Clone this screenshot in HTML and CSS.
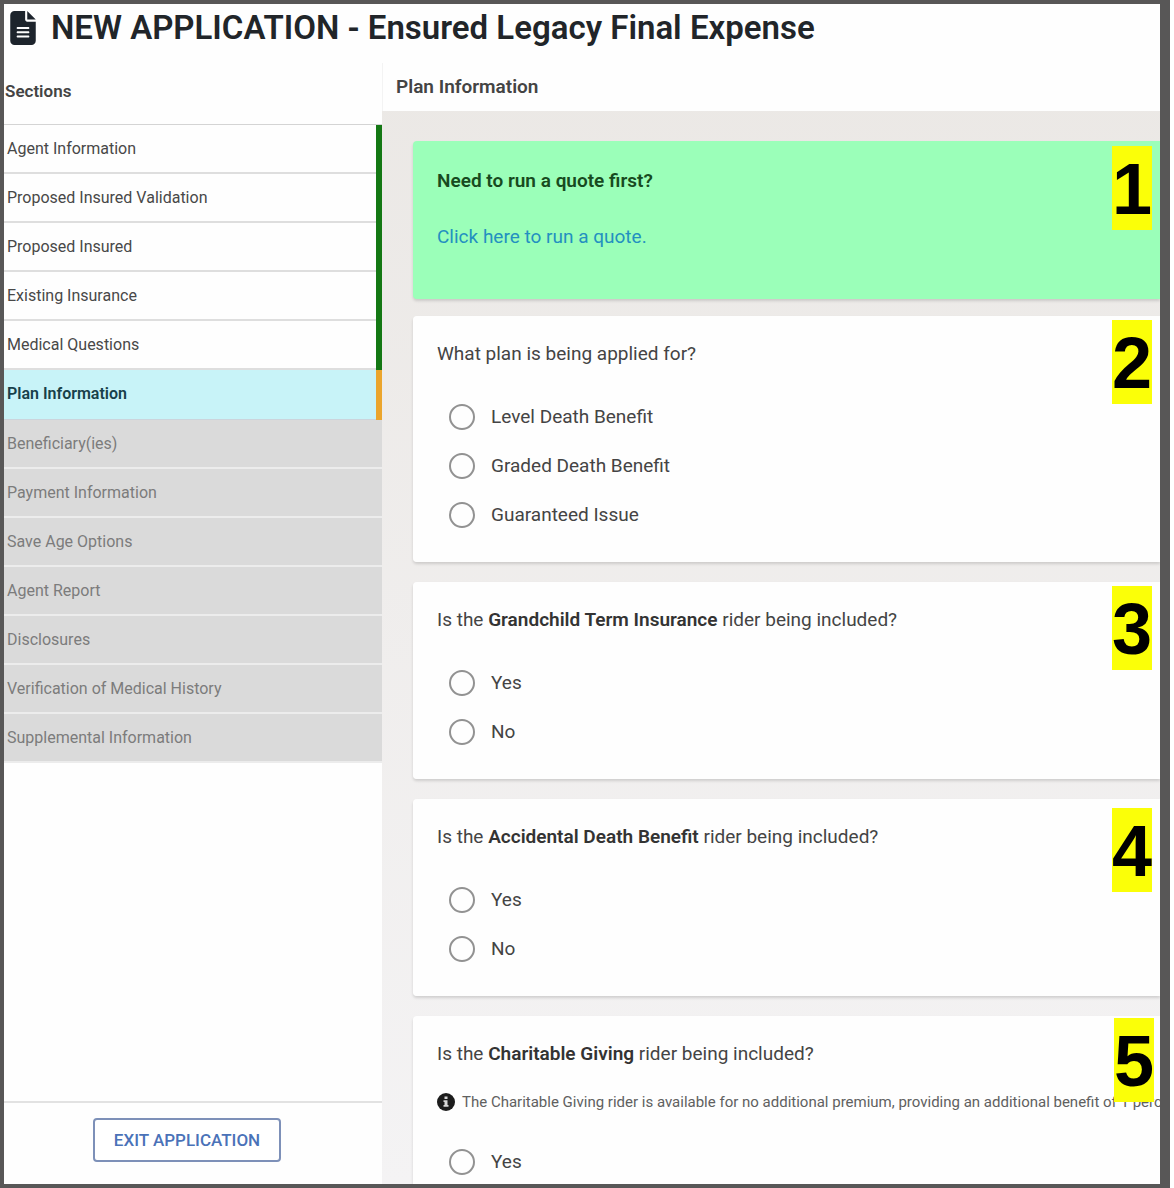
FILE: index.html
```html
<!DOCTYPE html>
<html lang="en">
<head>
    <meta charset="UTF-8">
    <meta name="viewport" content="width=device-width, initial-scale=1.0">
    <title>New Application</title>
    <link rel="stylesheet" href="styles.css">
</head>
<body>
    <div class="app">
        <header class="app-header">
            <svg class="file-icon" viewBox="0 0 384 512" aria-hidden="true">
                <path d="M64 0C28.700 0 0 28.700 0 64V448c0 35.300 28.700 64 64 64H320c35.300 0 64-28.700 64-64V160H256c-17.700 0-32-14.300-32-32V0H64zM256 0V128H384L256 0zM112 240H272c8.800 0 16 7.200 16 16s-7.200 16-16 16H112c-8.800 0-16-7.200-16-16s7.200-16 16-16zm0 64H272c8.800 0 16 7.200 16 16s-7.200 16-16 16H112c-8.800 0-16-7.200-16-16s7.200-16 16-16zm0 64H272c8.800 0 16 7.200 16 16s-7.200 16-16 16H112c-8.800 0-16-7.200-16-16s7.200-16 16-16z"/>
            </svg>
            <h1>NEW APPLICATION - Ensured Legacy Final Expense</h1>
        </header>

        <div class="layout">
            <aside class="sidebar">
                <h2 class="sidebar-title">Sections</h2>
                <nav class="section-list">
                    <a class="section done" href="#">Agent Information</a>
                    <a class="section done" href="#">Proposed Insured Validation</a>
                    <a class="section done" href="#">Proposed Insured</a>
                    <a class="section done" href="#">Existing Insurance</a>
                    <a class="section done" href="#">Medical Questions</a>
                    <a class="section active" href="#" aria-current="page">Plan Information</a>
                    <a class="section locked" href="#">Beneficiary(ies)</a>
                    <a class="section locked" href="#">Payment Information</a>
                    <a class="section locked" href="#">Save Age Options</a>
                    <a class="section locked" href="#">Agent Report</a>
                    <a class="section locked" href="#">Disclosures</a>
                    <a class="section locked" href="#">Verification of Medical History</a>
                    <a class="section locked" href="#">Supplemental Information</a>
                </nav>
                <div class="sidebar-footer">
                    <button type="button" class="exit-btn">EXIT APPLICATION</button>
                </div>
            </aside>

            <main class="content">
                <h2 class="content-title">Plan Information</h2>
                <form class="cards">
                    <section class="card quote">
                        <h3>Need to run a quote first?</h3>
                        <a href="#">Click here to run a quote.</a>
                    </section>

                    <fieldset class="card">
                        <legend>What plan is being applied for?</legend>
                        <label class="option"><input type="radio" name="plan">Level Death Benefit</label>
                        <label class="option"><input type="radio" name="plan">Graded Death Benefit</label>
                        <label class="option"><input type="radio" name="plan">Guaranteed Issue</label>
                    </fieldset>

                    <fieldset class="card">
                        <legend>Is the <b>Grandchild Term Insurance</b> rider being included?</legend>
                        <label class="option"><input type="radio" name="grandchild">Yes</label>
                        <label class="option"><input type="radio" name="grandchild">No</label>
                    </fieldset>

                    <fieldset class="card">
                        <legend>Is the <b>Accidental Death Benefit</b> rider being included?</legend>
                        <label class="option"><input type="radio" name="accidental">Yes</label>
                        <label class="option"><input type="radio" name="accidental">No</label>
                    </fieldset>

                    <fieldset class="card">
                        <legend>Is the <b>Charitable Giving</b> rider being included?</legend>
                        <p class="note">
                            <svg class="info-icon" viewBox="0 0 18 18" aria-hidden="true">
                                <circle cx="9" cy="9" r="9"/>
                                <path d="M7.500 3.500h3v2.500h-3zM6.500 7.300h4v4.700h1v1.700h-5v-1.700h1v-3h-1z"/>
                            </svg>
                            <span>The Charitable Giving rider is available for no additional premium, providing an additional benefit of 1 percent</span>
                        </p>
                        <label class="option"><input type="radio" name="charitable">Yes</label>
                    </fieldset>
                </form>
            </main>
        </div>

        <!-- numbered callouts pinned over the form -->
        <span class="marker marker-1">1</span>
        <span class="marker marker-2">2</span>
        <span class="marker marker-3">3</span>
        <span class="marker marker-4">4</span>
        <span class="marker marker-5">5</span>
    </div>
</body>
</html>
```
FILE: styles.css
```css
* {
    box-sizing: border-box;
}

body {
    margin: 0 4px 0 0;
    font-family: Roboto, Arial, sans-serif;
    font-size: 19px;
    color: #444;
    background: #fff;
}

h1, h2, h3, p {
    margin: 0;
}

.app {
    position: relative;
    display: flex;
    flex-direction: column;
    height: 100vh;
    border: 4px solid #585757;
    border-right-width: 10px;
    overflow: hidden;
    background: #fefefe;
}

.app-header {
    display: flex;
    align-items: center;
    gap: 15px;
    height: 59px;
    padding: 0 6px 12px;
    flex-shrink: 0;
}

.app-header h1 {
    font-size: 33px;
    font-weight: 600;
    line-height: 40px;
    color: #212529;
    white-space: nowrap;
}

.file-icon {
    width: 26px;
    height: 34px;
    flex-shrink: 0;
    fill: #1d242c;
}

.layout {
    display: flex;
    flex: 1;
    min-height: 0;
}

/* sidebar */
.sidebar {
    display: flex;
    flex-direction: column;
    width: 378px;
    flex-shrink: 0;
}

.sidebar-title {
    padding: 16px 1px 20px;
    font-size: 17px;
    font-weight: 600;
    line-height: 25px;
    color: #444;
}

.section-list {
    display: flex;
    flex-direction: column;
    flex: 1;
    border-top: 1px solid #d4d4d4;
}

.section {
    height: 49px;
    padding: 0 3px;
    border-right: 6px solid transparent;
    font-size: 16px;
    line-height: 47px;
    text-decoration: none;
    color: #484848;
    box-shadow: inset 0 -2px #dedede;
}

.done {
    border-right-color: #147814;
}

.active {
    height: 50px;
    border-right-color: #eba52c;
    font-weight: 600;
    color: #17404a;
    background: #c8f3f8;
    box-shadow: inset 0 -1px #ccd4dc;
}

.locked {
    border-right: 0;
    color: #7c7c7c;
    background: #dadada;
    box-shadow: inset 0 -2px #ececec;
}

.sidebar-footer {
    display: flex;
    justify-content: center;
    padding: 15px 12px 22px 0;
    border-top: 2px solid #e2e2e2;
}

.exit-btn {
    padding: 0 19px;
    border: 2px solid #7d90b8;
    border-radius: 4px;
    font-family: inherit;
    font-size: 17px;
    font-weight: 500;
    line-height: 40px;
    color: #4a72b8;
    background: #fff;
    cursor: pointer;
}

/* form */
.content {
    flex: 1;
    min-width: 0;
    background: linear-gradient(#ebe8e5, #f4f3f4);
}

.content-title {
    padding: 11px 13px;
    border-left: 1px solid #f3f3f3;
    font-size: 19px;
    font-weight: 600;
    line-height: 26px;
    color: #444;
    background: #fefefe;
}

.cards {
    padding: 30px 0 0 31px;
}

.card {
    min-width: 0;
    margin: 0 0 20px;
    padding: 25px 0 23px 24px;
    border: 0;
    border-radius: 4px 0 0 4px;
    background: #fefefe;
    box-shadow: 0 2px 3px rgba(0, 0, 0, 0.14);
}

.card legend {
    float: left;
    width: 100%;
    padding: 0;
    margin-bottom: 25px;
    line-height: 26px;
    white-space: nowrap;
}

.card b {
    font-weight: 600;
    color: #333;
}

.quote {
    margin-bottom: 17px;
    padding: 27px 24px 49px;
    line-height: 26px;
    background: #9bffb9;
}

.quote h3 {
    margin-bottom: 30px;
    font-size: 19px;
    font-weight: 600;
    color: #174a20;
}

.quote a {
    display: block;
    text-decoration: none;
    color: #2390c0;
}

.option {
    display: flex;
    align-items: center;
    clear: both;
    gap: 16px;
    height: 49px;
    padding-left: 12px;
}

.option input {
    appearance: none;
    width: 26px;
    height: 26px;
    margin: 0;
    border: 2px solid #929292;
    border-radius: 50%;
}

.option input:checked {
    background: radial-gradient(#4a72b8 45%, transparent 50%);
}

.note {
    display: flex;
    align-items: center;
    clear: both;
    gap: 7px;
    margin-bottom: 25px;
    font-size: 15px;
    line-height: 20px;
    color: #606060;
    white-space: nowrap;
    overflow: hidden;
}

.info-icon {
    width: 18px;
    height: 18px;
    flex-shrink: 0;
    fill: #1c1c1c;
}

.info-icon path {
    fill: #d8d8d8;
}

/* callouts */
.marker {
    position: absolute;
    right: 8px;
    padding-top: 2px;
    font-family: "Liberation Sans", Arial, sans-serif;
    font-size: 72px;
    font-weight: bold;
    line-height: 82px;
    color: #000;
    background: #fbff08;
}

.marker-1 { top: 142px; }
.marker-2 { top: 316px; }
.marker-3 { top: 582px; }
.marker-4 { top: 804px; }
.marker-5 { top: 1014px; right: 6px; }
```
